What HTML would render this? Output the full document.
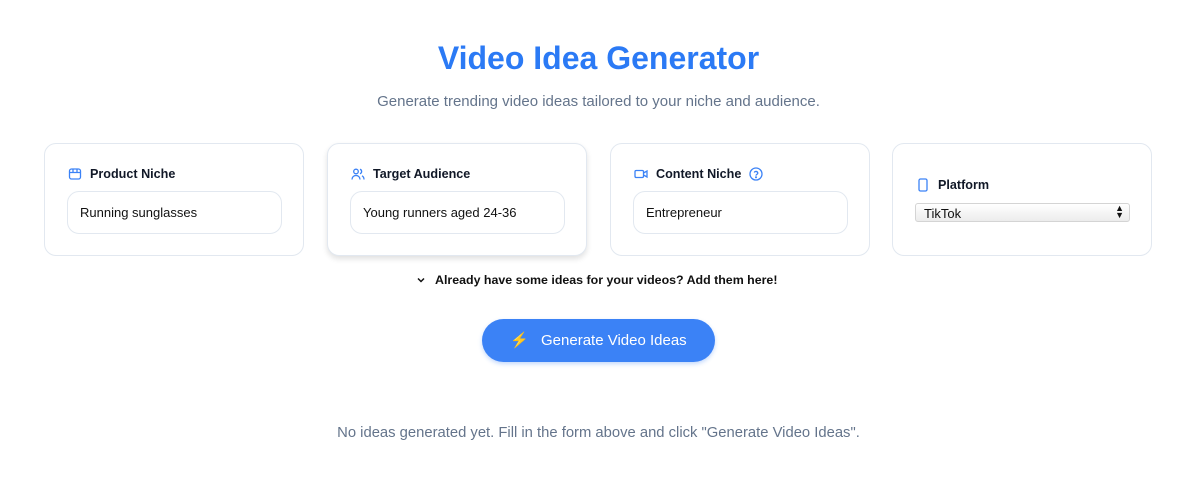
<!DOCTYPE html>
<html><head><style>
*{box-sizing:border-box;margin:0;padding:0}
body{width:1200px;height:480px;background:#fff;font-family:"Liberation Sans",sans-serif;position:relative;overflow:hidden}
h1{position:absolute;top:40px;left:0;width:1197px;text-align:center;font-size:32px;font-weight:bold;color:#2b7af5}
.sub{position:absolute;top:93px;width:1197px;text-align:center;font-size:15px;color:#64748b}
.card{position:absolute;top:143px;width:260px;height:113px;border:1px solid #e2e8f0;border-radius:12px;background:#fff}
.lbl{position:absolute;left:23px;top:23px;font-size:12.6px;font-weight:bold;color:#111827;display:flex;align-items:center;gap:8px}
.inp{position:absolute;left:22px;top:47px;width:215px;height:43px;border:1px solid #e2e8f0;border-radius:12px;font-size:13px;color:#111;padding:13px 12px}
svg{display:block}
.sel{position:absolute;left:22px;top:59px;width:215px;height:19px;border:1px solid #d4d4d4;border-radius:3px;background:linear-gradient(#fff,#ececec);font-size:13px;padding:2px 8px;color:#111}
.btn{position:absolute;left:482px;top:319px;width:233px;height:43px;border-radius:22px;background:#3b82f6;color:#fff;font-size:15px;text-align:center;line-height:43px;box-shadow:0 2px 4px rgba(59,130,246,.3)}
</style></head><body>
<h1>Video Idea Generator</h1>
<div class="sub">Generate trending video ideas tailored to your niche and audience.</div>

<div class="card" style="left:44px">
<div class="lbl"><svg width="14" height="14" viewBox="0 0 14 14" fill="none" stroke="#3b82f6" stroke-width="1.3"><rect x="1.5" y="2" width="11" height="10" rx="2"/><path d="M1.5 5.5h11M5 2v3.5M9 2v3.5"/></svg>Product Niche</div>
<div class="inp">Running sunglasses</div></div>

<div class="card" style="left:327px;box-shadow:0 3px 6px rgba(0,0,0,.12)">
<div class="lbl"><svg width="14" height="14" viewBox="0 0 14 14" fill="none" stroke="#3b82f6" stroke-width="1.3"><circle cx="5" cy="4.5" r="2.3"/><path d="M1 12.5c0-2.5 1.8-4 4-4s4 1.5 4 4M9 2.3a2.3 2.3 0 010 4.4M11 8.8c1.2.6 2 1.8 2 3.7"/></svg>Target Audience</div>
<div class="inp">Young runners aged 24-36</div></div>

<div class="card" style="left:610px">
<div class="lbl"><svg width="14" height="14" viewBox="0 0 14 14" fill="none" stroke="#3b82f6" stroke-width="1.3"><rect x="1" y="3.5" width="8.5" height="7" rx="1.2"/><path d="M9.5 6l3.5-2v6l-3.5-2"/></svg>Content Niche<svg width="14" height="14" viewBox="0 0 14 14" fill="none" stroke="#3b82f6" stroke-width="1.3"><circle cx="7" cy="7" r="6"/><path d="M5.2 5.5a1.9 1.9 0 013.6.6c0 1.2-1.8 1.4-1.8 2.5"/><circle cx="7" cy="10.3" r=".4" fill="#3b82f6"/></svg></div>
<div class="inp">Entrepreneur</div></div>

<div class="card" style="left:892px">
<div class="lbl" style="top:34px"><svg width="14" height="14" viewBox="0 0 14 14" fill="none" stroke="#3b82f6" stroke-width="1.3"><rect x="3" y="1" width="8" height="12" rx="1.5"/><path d="M7 11h.01"/></svg>Platform</div>
<div class="sel">TikTok<span style="position:absolute;right:5px;top:1px;font-size:9px;line-height:7px">▲<br>▼</span></div></div>

<div style="position:absolute;top:273px;left:416px;font-size:12.4px;font-weight:bold;color:#111;display:flex;align-items:center;gap:9px"><svg width="10" height="10" viewBox="0 0 10 10" fill="none" stroke="#111" stroke-width="1.5"><path d="M2 3.5l3 3 3-3"/></svg>Already have some ideas for your videos? Add them here!</div>

<div class="btn"><span style="color:#fbbf24;margin-right:12px">⚡</span>Generate Video Ideas</div>

<div style="position:absolute;top:425px;width:1197px;text-align:center;font-size:14.8px;color:#64748b">No ideas generated yet. Fill in the form above and click "Generate Video Ideas".</div>
</body></html>
